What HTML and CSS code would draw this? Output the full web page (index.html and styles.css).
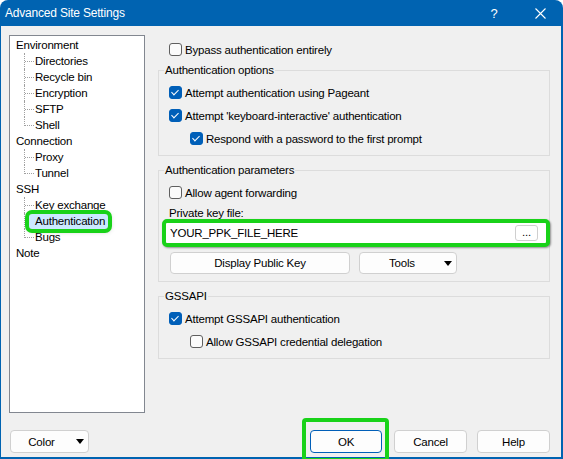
FILE: index.html
```html
<!DOCTYPE html>
<html lang="en">
<head>
    <meta charset="UTF-8">
    <title>Advanced Site Settings</title>
    <link rel="stylesheet" href="styles.css">
</head>
<body>
<div class="window">
    <div class="titlebar">
        <span class="title">Advanced Site Settings</span>
        <span class="cap-btn">?</span>
        <span class="cap-btn">
            <svg width="11" height="11" viewBox="0 0 11 11"><path d="M0.5 0.5 L10.5 10.5 M10.5 0.5 L0.5 10.5" stroke="#fff" stroke-width="1.1" fill="none"/></svg>
        </span>
    </div>

    <div class="client">
        <div class="main">
            <div class="tree">
                <ul class="roots">
                    <li>
                        <div class="node">Environment</div>
                        <ul class="kids">
                            <li>Directories</li>
                            <li>Recycle bin</li>
                            <li>Encryption</li>
                            <li>SFTP</li>
                            <li>Shell</li>
                        </ul>
                    </li>
                    <li>
                        <div class="node">Connection</div>
                        <ul class="kids">
                            <li>Proxy</li>
                            <li>Tunnel</li>
                        </ul>
                    </li>
                    <li>
                        <div class="node">SSH</div>
                        <ul class="kids">
                            <li>Key exchange</li>
                            <li><span class="sel">Authentication</span></li>
                            <li>Bugs</li>
                        </ul>
                    </li>
                    <li>
                        <div class="node">Note</div>
                    </li>
                </ul>
            </div>

            <div class="page">
                <div class="row"><span class="cb"></span>Bypass authentication entirely</div>

                <fieldset class="group">
                    <legend>Authentication options</legend>
                    <div class="row"><span class="cb on"></span>Attempt authentication using Pageant</div>
                    <div class="row"><span class="cb on"></span>Attempt 'keyboard-interactive' authentication</div>
                    <div class="row sub"><span class="cb on"></span>Respond with a password to the first prompt</div>
                </fieldset>

                <fieldset class="group">
                    <legend>Authentication parameters</legend>
                    <div class="row"><span class="cb"></span>Allow agent forwarding</div>
                    <div class="key-label">Private key file:</div>
                    <div class="key-box">
                        <span class="key-text">YOUR_PPK_FILE_HERE</span>
                        <span class="browse">...</span>
                    </div>
                    <div class="btn-row">
                        <span class="btn public-key">Display Public Key</span>
                        <span class="btn drop tools"><span class="drop-text">Tools</span><span class="arrow"></span></span>
                    </div>
                </fieldset>

                <fieldset class="group">
                    <legend>GSSAPI</legend>
                    <div class="row"><span class="cb on"></span>Attempt GSSAPI authentication</div>
                    <div class="row sub"><span class="cb"></span>Allow GSSAPI credential delegation</div>
                </fieldset>
            </div>
        </div>

        <div class="footer">
            <span class="btn drop color"><span class="drop-text">Color</span><span class="arrow"></span></span>
            <span class="spacer"></span>
            <span class="btn ok">OK</span>
            <span class="btn cancel">Cancel</span>
            <span class="btn help-btn">Help</span>
        </div>
    </div>
</div>
</body>
</html>
```

FILE: styles.css
```css
* {
    box-sizing: border-box;
}
body {
    margin: 0;
    background: #fff;
    font-family: "Liberation Sans", Arial, sans-serif;
    font-size: 11.5px;
    letter-spacing: -0.2px;
    color: #000;
}
.window {
    width: 563px;
    height: 459px;
    background: #0063b1;
    border-radius: 8px 8px 0 0;
    display: flex;
    flex-direction: column;
    overflow: hidden;
}
.titlebar {
    height: 26px;
    display: flex;
    align-items: center;
    color: #fff;
    padding-left: 5px;
    font-size: 12px;
}
.title {
    flex: 1;
}
.cap-btn {
    width: 46px;
    height: 26px;
    display: flex;
    align-items: center;
    justify-content: center;
    font-size: 13px;
}
.client {
    flex: 1;
    background: #f0f0f0;
    margin: 0 2px 2px 1px;
    display: flex;
    flex-direction: column;
}
.main {
    display: flex;
    padding: 9px 0 0 8px;
}

/* tree */
.tree {
    width: 136px;
    height: 378px;
    background: #fff;
    border: 1px solid #828790;
    padding-top: 1px;
}
.tree ul {
    list-style: none;
    margin: 0;
    padding: 0;
}
.roots > li {
    padding-left: 6px;
}
.node {
    line-height: 16px;
}
.kids {
    margin-left: 8px !important;
}
.kids li {
    position: relative;
    padding-left: 11px;
    line-height: 16px;
    height: 16px;
}
.kids li::before {
    content: '';
    position: absolute;
    left: 0;
    top: 0;
    bottom: 0;
    border-left: 1px dotted #a0a0a0;
}
.kids li:last-child::before {
    bottom: auto;
    height: 9px;
}
.kids li::after {
    content: '';
    position: absolute;
    left: 1px;
    top: 8px;
    width: 9px;
    border-top: 1px dotted #a0a0a0;
}
.sel {
    display: inline-block;
    position: relative;
    z-index: 1;
    line-height: 15px;
    background: #cce8ff;
    margin-left: -6px;
    padding: 0 3px 0 6px;
    border-radius: 3px;
    outline: 4px solid #19d219;
    box-shadow: 1px 1px 5px 1px rgba(0, 0, 0, 0.35);
}

/* right page */
.page {
    width: 392px;
    margin-left: 13px;
}
.row {
    display: flex;
    align-items: center;
    height: 23px;
    padding-left: 10px;
}
.page > .row {
    margin-top: 3px;
    padding-left: 11px;
}
.row.sub {
    padding-left: 31px;
}
.cb {
    width: 13px;
    height: 13px;
    flex: none;
    margin-right: 3px;
    border: 1px solid #5f5f5f;
    border-radius: 3px;
    background: #fbfbfb;
    position: relative;
}
.cb.on {
    background: #005fb8;
    border-color: #005fb8;
}
.cb.on::after {
    content: '';
    position: absolute;
    left: 3px;
    top: 1px;
    width: 3px;
    height: 6px;
    border-right: 1px solid #fff;
    border-bottom: 1px solid #fff;
    transform: rotate(45deg);
}
.group {
    margin: 6px 0 0;
    padding: 0 0 5px;
    border: 1px solid #dcdcdc;
    min-width: 0;
}
.page > .row + .group {
    margin-top: 1px;
}
.group legend {
    padding: 0 1px;
    margin-left: 5px;
    line-height: 16px;
}
.group legend + * {
    margin-top: 3px;
}
.key-label {
    margin-top: 1px;
    padding-left: 10px;
    line-height: 16px;
}
.key-box {
    position: relative;
    margin: -2px -1px 0 3px;
    height: 28px;
    border: 4px solid #19d219;
    border-radius: 5px;
    background: #fff;
    display: flex;
    align-items: center;
    padding-left: 4px;
    box-shadow: 1px 1px 2px rgba(0, 0, 0, 0.4);
}
.key-text {
    flex: 1;
}
.browse {
    width: 23px;
    height: 16px;
    margin-right: 8px;
    border: 1px solid #cfcfcf;
    border-radius: 3px;
    text-align: center;
    line-height: 12px;
}
.btn-row {
    display: flex;
    gap: 9px;
    margin-top: 5px;
    padding-left: 11px;
}
.group:nth-of-type(2) {
    padding-bottom: 7px;
}
.btn {
    height: 22px;
    display: flex;
    align-items: center;
    justify-content: center;
    border: 1px solid #d0d0d0;
    border-radius: 4px;
    background: #fdfdfd;
}
.public-key {
    width: 180px;
}
.tools {
    width: 98px;
}
.drop {
    padding-right: 4px;
}
.drop-text {
    flex: 1;
    text-align: center;
}
.arrow {
    width: 0;
    height: 0;
    border-left: 4px solid transparent;
    border-right: 4px solid transparent;
    border-top: 5px solid #000;
}

/* bottom buttons */
.footer {
    margin-top: auto;
    display: flex;
    align-items: center;
    padding: 0 11px 4px 9px;
}
.footer .btn {
    height: 23px;
}
.spacer {
    flex: 1;
}
.color {
    width: 79px;
}
.color .arrow {
    margin-left: 4px;
}
.ok {
    width: 72px;
    position: relative;
    border-color: #005fb8;
}
.ok::after {
    content: '';
    position: absolute;
    top: -13px;
    left: -9px;
    right: -8px;
    bottom: -10px;
    border: 4px solid #19d219;
    border-radius: 4px;
}
.cancel {
    width: 73px;
    margin-left: 12px;
}
.help-btn {
    width: 73px;
    margin-left: 10px;
}
```
